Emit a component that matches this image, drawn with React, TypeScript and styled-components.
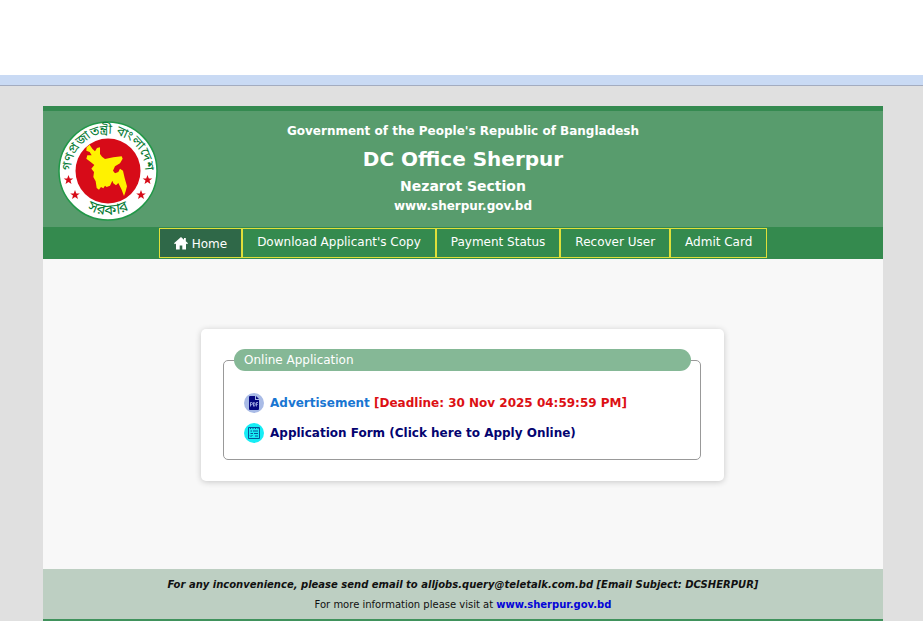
import React from "react";
import styled, { createGlobalStyle } from "styled-components";

const Global = createGlobalStyle`
  *, *::before, *::after { box-sizing: border-box; }
  body {
    margin: 0;
    background: #e0e0e0;
    font-family: Verdana, "DejaVu Sans", sans-serif;
    font-size: 12px;
    color: #111;
  }
  a { text-decoration: none; color: inherit; }
`;

const TopSpace = styled.div`
  height: 75px;
  background: #fff;
`;

const TopBand = styled.div`
  height: 11px;
  background: #c9daf4;
  border-bottom: 1px solid #a3acc0;
`;

const Page = styled.div`
  margin: 20px 40px 0 43px;
  background: #f8f8f8;
`;

const Header = styled.header`
  display: grid;
  grid-template-columns: 100px 1fr 100px;
  padding: 10px 15px 6px;
  border-top: 5px solid #348a50;
  background: #589c6d;
`;

const Titles = styled.div`
  display: flex;
  flex-direction: column;
  align-items: center;
  color: #fff;
  font-weight: bold;
`;

const TitleLine = styled.div<{ $size: number; $line: number }>`
  font-size: ${(p) => p.$size}px;
  line-height: ${(p) => p.$line}px;
`;

const OfficeName = styled.h1`
  margin: 0;
  font-size: 20px;
  line-height: 36px;
`;

const Nav = styled.nav`
  display: flex;
  justify-content: center;
  padding: 1px 0;
  background: #348a4e;
`;

const NavLink = styled.a<{ $active?: boolean }>`
  display: flex;
  gap: 4px;
  height: 30px;
  padding: ${(p) => (p.$active ? "2px" : "0")} 14px 0;
  border: 1px solid #dfe03a;
  background: ${(p) => (p.$active ? "#2f6848" : "transparent")};
  color: #fff;
  line-height: 26px;
  white-space: nowrap;

  svg { margin-top: 6px; }
`;

const Main = styled.main`
  padding: 70px 159px 88px 158px;
`;

const Card = styled.section`
  padding: 20px 23px 21px 22px;
  border-radius: 5px;
  background: #fff;
  box-shadow: 0 1px 6px rgba(0, 0, 0, 0.2);
`;

const Group = styled.fieldset`
  min-width: 0;
  margin: 0;
  padding: 17px 9px 11px 10px;
  border: 1px solid #999;
  border-radius: 5px;
`;

const GroupTitle = styled.legend`
  width: 100%;
  padding: 0 10px;
  border-radius: 11px;
  background: #85b896;
  color: #fff;
  line-height: 22px;
`;

const Item = styled.div`
  display: flex;
  align-items: center;
  gap: 6px;
  height: 30px;
  padding-left: 10px;
  font-weight: bold;
  white-space: nowrap;
`;

const ItemLink = styled.a<{ $color: string }>`
  color: ${(p) => p.$color};
`;

const Deadline = styled.span`
  color: #dc1014;
`;

const Footer = styled.footer`
  padding: 6px 0 4px;
  border-bottom: 2px solid #40925c;
  background: #bdcfc2;
  font-size: 10px;
  line-height: 20px;
  text-align: center;
`;

const Notice = styled.p`
  margin: 0;
  font-weight: bold;
  font-style: italic;
`;

const Info = styled.p`
  margin: 0;
`;

const SiteLink = styled.a`
  color: #0505d8;
  font-weight: bold;
`;

const STAR = "0,-5 1.3,-1.6 4.8,-1.6 2,.6 3,4 0,2 -3,4 -2,.6 -4.8,-1.6 -1.3,-1.6";

const Seal = () => (
  <svg width="100" height="100" viewBox="0 0 100 100" role="img" aria-label="Government seal">
    <defs>
      <path id="sealTop" d="M13.9 58A37 37 0 1 1 86.1 58" />
      <path id="sealBottom" d="M18 80A44 44 0 0 0 82 80" />
    </defs>
    <circle cx="50" cy="50" r="49" fill="#fff" stroke="#219848" strokeWidth="1.5" />
    <circle cx="50" cy="50" r="32.5" fill="#d70b18" />
    <path
      transform="scale(.3333) translate(-9 -9)"
      fill="#fff200"
      d="M95 88L104 80 112 92 120 100 126 90 135 88 135 108 141 116 150 123 175 118 200 115 203 122 195 136 180 145 174 158 180 166 190 162 195 152 204 158 209 180 216 205 212 220 207 234 200 215 190 195 183 202 175 196 172 188 165 203 155 207 150 203 145 211 138 207 132 215 125 210 122 190 115 177 117 162 109 152 118 141 107 132 94 122 97 112 110 112 104 102 94 98z"
    />
    <g fill="#d70b18">
      <polygon points={STAR} transform="translate(10.500 59)" />
      <polygon points={STAR} transform="translate(17 74)" />
      <polygon points={STAR} transform="translate(89.500 59)" />
      <polygon points={STAR} transform="translate(83 74)" />
    </g>
    <g fill="#087b35" fontFamily='"Noto Sans Bengali", "Noto Sans", sans-serif' textAnchor="middle">
      <text fontSize="13"><textPath href="#sealTop" startOffset="50%">গণপ্রজাতন্ত্রী বাংলাদেশ</textPath></text>
      <text fontSize="15"><textPath href="#sealBottom" startOffset="50%">সরকার</textPath></text>
    </g>
  </svg>
);

const HomeIcon = () => (
  <svg width="14" height="13" viewBox="0 0 14 13" fill="#fff" aria-hidden="true">
    <path d="M7 0L0 6.200 1 7.300 2 6.500V12.500H5.700V8.500H8.300V12.500H12V6.500L13 7.300 14 6.200 11.800 4.300V1H10V2.700z" />
  </svg>
);

const PdfIcon = () => (
  <svg width="20" height="20" viewBox="0 0 20 20" aria-hidden="true">
    <circle cx="10" cy="10" r="10" fill="#a9bbe6" />
    <path d="M6 3H11V7H15V16Q15 17 14 17H6Q5 17 5 16V4Q5 3 6 3z" fill="#05087f" />
    <path d="M12 3L15 6H12z" fill="#05087f" />
    <path
      d="M6.500 13.500V9.500H7.500Q8.500 9.500 8.500 10.600T7.500 11.700H6.500M9.500 9.500V13.200H10Q11.200 13.200 11.200 11.400T10 9.500zM12.400 13.500V9.500H14M12.400 11.400H13.800"
      fill="none"
      stroke="#b9c6f2"
      strokeWidth=".8"
    />
  </svg>
);

const FormIcon = () => (
  <svg width="20" height="20" viewBox="0 0 20 20" aria-hidden="true">
    <circle cx="10" cy="10" r="10" fill="#16edf5" />
    <path
      d="M4.500 4.500H15.500V15.500H4.500zM6.500 4V6M9 4V6M11.500 4V6M14 4V6M6.500 8H8M9 8H14M6.500 10.500H9M10 10.500H14M11 13H14M6 12.500L7 13.500 8.500 12"
      fill="none"
      stroke="#07549a"
      strokeWidth="1"
    />
  </svg>
);

const NAV_ITEMS = ["Download Applicant's Copy", "Payment Status", "Recover User", "Admit Card"];

export default function App() {
  return (
    <>
      <Global />
      <TopSpace />
      <TopBand />
      <Page>
        <Header>
          <Seal />
          <Titles>
            <TitleLine $size={12} $line={20}>Government of the People's Republic of Bangladesh</TitleLine>
            <OfficeName>DC Office Sherpur</OfficeName>
            <TitleLine $size={14} $line={18}>Nezarot Section</TitleLine>
            <TitleLine $size={12} $line={22}>
              <a href="#site">www.sherpur.gov.bd</a>
            </TitleLine>
          </Titles>
        </Header>
        <Nav>
          <NavLink href="#home" $active>
            <HomeIcon />
            Home
          </NavLink>
          {NAV_ITEMS.map((label) => (
            <NavLink key={label} href="#">{label}</NavLink>
          ))}
        </Nav>
        <Main>
          <Card>
            <Group>
              <GroupTitle>Online Application</GroupTitle>
              <Item>
                <PdfIcon />
                <span>
                  <ItemLink href="#advertisement" $color="#1976d2">Advertisement</ItemLink>{" "}
                  <Deadline>[Deadline: 30 Nov 2025 04:59:59 PM]</Deadline>
                </span>
              </Item>
              <Item>
                <FormIcon />
                <ItemLink href="#apply" $color="#040470">Application Form (Click here to Apply Online)</ItemLink>
              </Item>
            </Group>
          </Card>
        </Main>
        <Footer>
          <Notice>For any inconvenience, please send email to alljobs.query@teletalk.com.bd [Email Subject: DCSHERPUR]</Notice>
          <Info>
            For more information please visit at <SiteLink href="#site">www.sherpur.gov.bd</SiteLink>
          </Info>
        </Footer>
      </Page>
    </>
  );
}
